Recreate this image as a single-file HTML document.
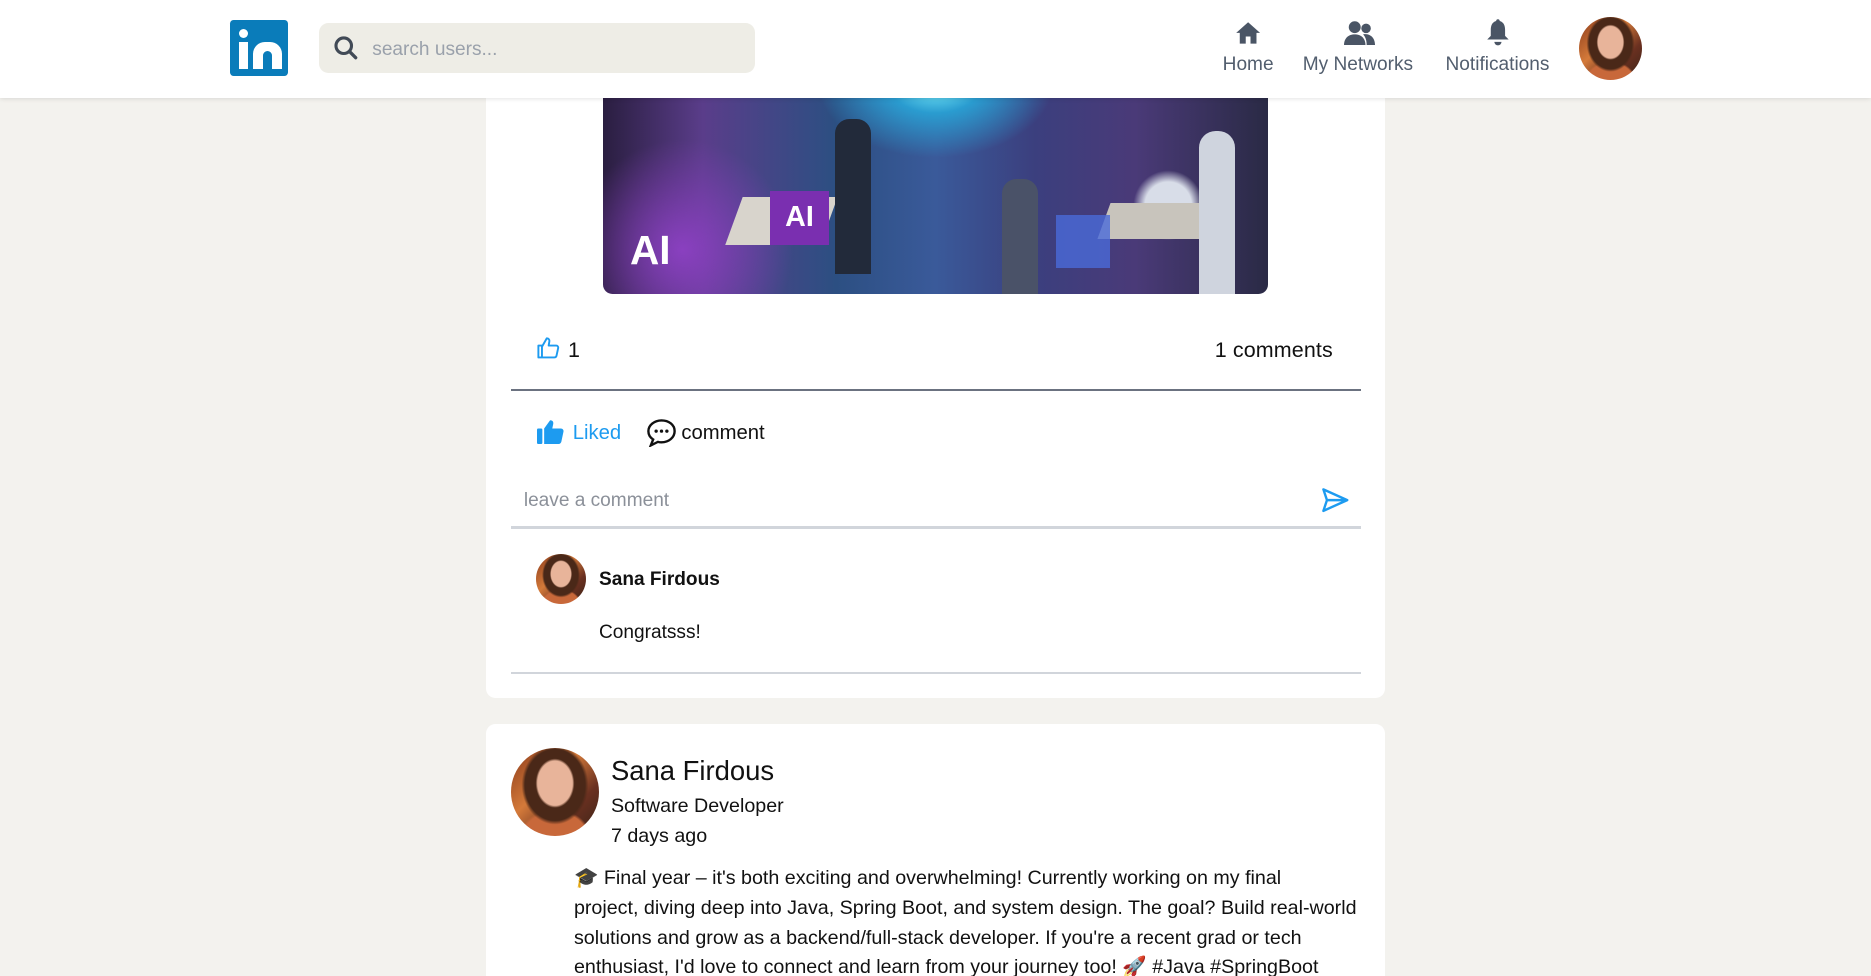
<!DOCTYPE html>
<html><head><meta charset="utf-8"><style>
*{margin:0;padding:0;box-sizing:border-box}
html,body{width:1871px;height:976px;overflow:hidden;background:#f3f2ee}
#w{zoom:1.19324;width:1568px;height:818px;position:relative;overflow:hidden;font-family:"Liberation Sans",sans-serif;color:#111}
.a{position:absolute}
.av{border-radius:50%;overflow:hidden;background:radial-gradient(ellipse 22% 28% at 50% 40%,#e8b49a 0 90%,transparent 100%),radial-gradient(ellipse 38% 45% at 50% 42%,#4a2818 0 90%,transparent 100%),radial-gradient(ellipse 40% 30% at 50% 100%,#c8683a 0 90%,transparent 100%),linear-gradient(135deg,#8a3a1a,#d47a3a 40%,#6a3020 70%,#3a2418)}
.hdr{left:0;top:0;width:1568px;height:82px;background:#fff;box-shadow:0 1px 4px rgba(0,0,0,.12);z-index:5}
.nav{color:#525e6e;font-size:16px;text-align:center}
.card{background:#fff;border-radius:8px;left:407px;width:754px}
</style></head><body><div id="w">
<div class="a hdr">
 <div class="a" style="left:193px;top:17px;width:48px;height:47px;background:#0a7cba;border-radius:3px"></div>
 <div class="a" style="left:200px;top:24px;width:8px;height:8px;background:#fff;border-radius:50%"></div>
 <div class="a" style="left:200px;top:35px;width:8px;height:23px;background:#fff"></div>
 <div class="a" style="left:212px;top:35px;width:24px;height:23px;background:#fff;border-radius:10px 10px 0 0"></div>
 <div class="a" style="left:220px;top:43px;width:8px;height:15px;background:#0a7cba;border-radius:4px 4px 0 0"></div>
 <div class="a" style="left:267px;top:19px;width:366px;height:42px;background:#eeede6;border-radius:8px"></div>
 <svg class="a" style="left:279px;top:29px" width="22" height="22" viewBox="0 0 22 22"><circle cx="9" cy="9" r="6.5" fill="none" stroke="#414a56" stroke-width="2.6"/><path d="M14 14l5 5" stroke="#414a56" stroke-width="2.8" stroke-linecap="round"/></svg>
 <div class="a" style="left:312px;top:33px;font-size:16px;color:#9aa1ab">search users...</div>
 <svg class="a" style="left:1035px;top:18px" width="22" height="20" viewBox="0 0 22 20"><path d="M11 1L1 10h3v9h5v-6h4v6h5v-9h3z" fill="#4a5565"/></svg>
 <div class="a nav" style="left:1006px;top:45px;width:80px">Home</div>
 <svg class="a" style="left:1126px;top:17px" width="26" height="22" viewBox="0 0 26 22"><circle cx="9" cy="6" r="5" fill="#4a5565"/><circle cx="18.5" cy="7" r="4" fill="#4a5565"/><path d="M0 21c0-6 4-9 9-9s9 3 9 9z" fill="#4a5565"/><path d="M16 12c5-1 10 2 10 9h-7c0-4-1-7-3-9z" fill="#4a5565"/></svg>
 <div class="a nav" style="left:1078px;top:45px;width:120px">My Networks</div>
 <svg class="a" style="left:1245px;top:15px" width="20" height="24" viewBox="0 0 20 24"><path d="M10 1c1 0 1.5.7 1.5 1.5C15 3.5 16 6.5 16 10v5l3 3H1l3-3v-5c0-3.5 1-6.5 4.5-7.5C8.5 1.7 9 1 10 1z" fill="#4a5565"/><path d="M7 20h6a3 3 0 0 1-6 0z" fill="#4a5565"/></svg>
 <div class="a nav" style="left:1200px;top:45px;width:110px">Notifications</div>
 <div class="a av" style="left:1323px;top:14px;width:53px;height:53px"></div>
</div>
<div class="a card" style="top:40px;height:545px;border-radius:0 0 8px 8px"></div>
<div class="a" style="left:505px;top:60px;width:558px;height:186px;border-radius:0 0 8px 8px;overflow:hidden;background:radial-gradient(ellipse at 50% 5%,#7ff4ff 0,#2a9cd0 10%,transparent 25%),radial-gradient(circle at 85% 60%,#d8dde8 0 4%,transparent 6%),radial-gradient(circle at 12% 80%,#8a40c0 0,transparent 18%),linear-gradient(90deg,#2a1e40,#5a3d8a 15%,#2c4f82 35%,#3a5a9a 50%,#3b3f7e 65%,#4a3a78 80%,#2a2a45)">
 <div class="a" style="left:110px;top:105px;width:80px;height:40px;background:#d8d4cc;transform:skewX(-20deg)"></div>
 <div class="a" style="left:420px;top:110px;width:90px;height:30px;background:#c8c4bc;transform:skewX(-20deg)"></div>
 <div class="a" style="left:380px;top:120px;width:45px;height:45px;background:#4a6ad8;opacity:.8"></div>
 <div class="a" style="left:195px;top:40px;width:30px;height:130px;background:#222a3a;border-radius:12px 12px 0 0"></div>
 <div class="a" style="left:335px;top:90px;width:30px;height:96px;background:#4a5268;border-radius:12px 12px 0 0"></div>
 <div class="a" style="left:500px;top:50px;width:30px;height:136px;background:#cfd4de;border-radius:14px 14px 0 0"></div>
</div>
<div class="a" style="left:528px;top:190px;color:#fff;font-size:34px;font-weight:bold">AI</div>
<div class="a" style="left:645px;top:160px;width:50px;height:45px;background:#7a2fb0;color:#fff;font-size:24px;font-weight:bold;text-align:center;line-height:45px">AI</div>
<svg class="a" style="left:449px;top:282px" width="20" height="20" viewBox="0 0 20 20"><path d="M2 8h3v10H2zM5 9l4-7c1.5 0 2.5 1 2.2 2.6L10.6 8H17c1 0 1.8 1 1.6 2l-1.4 6.5c-.2.9-1 1.5-1.9 1.5H5" fill="none" stroke="#1d9bf0" stroke-width="1.6" stroke-linejoin="round"/></svg>
<div class="a" style="left:476px;top:283px;font-size:18px">1</div>
<div class="a" style="left:1018px;top:283px;font-size:18px;letter-spacing:.1px">1 comments</div>
<div class="a" style="left:428px;top:326px;width:713px;height:2px;background:#6b7280"></div>
<svg class="a" style="left:450px;top:351px" width="23" height="22" viewBox="0 0 23 22"><rect x="0" y="8" width="4.5" height="13" rx="1" fill="#1d9bf0"/><path d="M6 8l5-7c2 0 3 1.3 2.6 3.2L12.8 8H20c1.5 0 2.5 1.3 2.2 2.6l-1.8 8.5c-.3 1.1-1.2 1.9-2.3 1.9H6z" fill="#1d9bf0"/></svg>
<div class="a" style="left:480px;top:354px;font-size:17px;color:#1d9bf0">Liked</div>
<svg class="a" style="left:541px;top:350px" width="26" height="25" viewBox="0 0 26 25"><path d="M13 2C7 2 2 6 2 11c0 3 1.5 5.4 4 7l-2 5 6-3c1 .3 2 .4 3 .4 6 0 11-4 11-9.4S19 2 13 2z" fill="none" stroke="#111" stroke-width="2"/><circle cx="8.5" cy="11" r="1.4" fill="#111"/><circle cx="13" cy="11" r="1.4" fill="#111"/><circle cx="17.5" cy="11" r="1.4" fill="#111"/></svg>
<div class="a" style="left:571px;top:354px;font-size:17px">comment</div>
<div class="a" style="left:439px;top:411px;font-size:16px;color:#8b9099">leave a comment</div>
<svg class="a" style="left:1107px;top:408px" width="24" height="22" viewBox="0 0 24 22"><path d="M2 2l20 9-20 9 3-9zM5 11h17" fill="none" stroke="#1d9bf0" stroke-width="2" stroke-linejoin="round"/></svg>
<div class="a" style="left:428px;top:441px;width:713px;height:2px;background:#d1d5db"></div>
<div class="a av" style="left:449px;top:464px;width:42px;height:42px"></div>
<div class="a" style="left:502px;top:477px;font-size:16px;font-weight:bold">Sana Firdous</div>
<div class="a" style="left:502px;top:521px;font-size:16px">Congratsss!</div>
<div class="a" style="left:428px;top:563px;width:713px;height:2px;background:#d1d5db"></div>
<div class="a card" style="top:607px;height:260px"></div>
<div class="a av" style="left:428px;top:627px;width:74px;height:74px"></div>
<div class="a" style="left:512px;top:633px;font-size:23px">Sana Firdous</div>
<div class="a" style="left:512px;top:666px;font-size:16.5px">Software Developer</div>
<div class="a" style="left:512px;top:691px;font-size:16.5px">7 days ago</div>
<div class="a" style="left:481px;top:724px;white-space:nowrap;font-size:16.5px;line-height:25px">🎓 Final year – it's both exciting and overwhelming! Currently working on my final<br>project, diving deep into Java, Spring Boot, and system design. The goal? Build real-world<br>solutions and grow as a backend/full-stack developer. If you're a recent grad or tech<br>enthusiast, I'd love to connect and learn from your journey too! 🚀 #Java #SpringBoot</div>
</div></body></html>
